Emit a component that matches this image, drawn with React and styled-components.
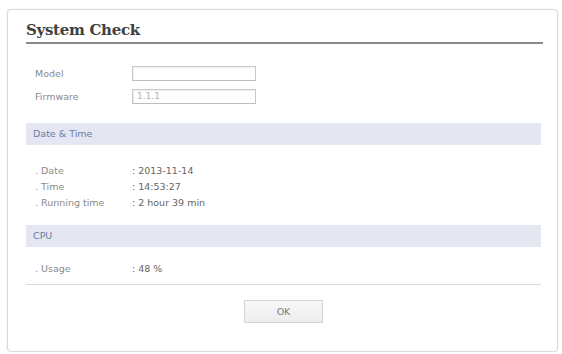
import React from "react";
import styled, { createGlobalStyle } from "styled-components";

const Global = createGlobalStyle`
  html, body { margin: 0; padding: 0; background: #ffffff; }
  body { font-family: "DejaVu Sans", Verdana, sans-serif; }
`;

const Card = styled.div`
  box-sizing: border-box;
  margin: 9px 0 0 7px;
  width: 551px;
  height: 343px;
  border: 1px solid #dadada;
  border-radius: 4px;
  box-shadow: 0 0 2px rgba(0, 0, 0, 0.1);
  background: #fff;
  padding: 10px 16px 0 18px;
  display: flex;
  flex-direction: column;
`;

const Title = styled.h1`
  margin: 0;
  font-family: "DejaVu Serif", Georgia, serif;
  font-weight: bold;
  font-size: 15px;
  line-height: 20px;
  color: #404040;
  padding: 0 0 2px 0;
  border-bottom: 2px solid #8a8a8a;
  margin-right: -2px;
  letter-spacing: -0.3px;
`;

const Form = styled.div`
  margin-top: 22px;
  display: flex;
  flex-direction: column;
  gap: 8px;
`;

const FormRow = styled.div`
  display: grid;
  grid-template-columns: 97px 124px;
  align-items: center;
  padding-left: 9px;
`;

const Label = styled.span`
  font-size: 9.5px;
  color: #8a8a8a;
`;

const Field = styled.div`
  box-sizing: border-box;
  height: 15px;
  border: 1px solid #c8c8c8;
  border-bottom-color: #bdbdbd;
  box-shadow: inset 1px 1px 1px rgba(0, 0, 0, 0.07);
  font-size: 9px;
  color: #b4b4b4;
  padding-left: 4px;
  line-height: 13px;
`;

const SectionBar = styled.div`
  margin-top: ${(p) => p.$gap}px;
  height: 22px;
  background: #e4e6f1;
  color: #6a7ca8;
  font-size: 9.5px;
  line-height: 22px;
  padding-left: 7px;
`;

const InfoList = styled.div`
  margin-top: ${(p) => p.$gap}px;
  display: flex;
  flex-direction: column;
`;

const InfoRow = styled.div`
  display: grid;
  grid-template-columns: 97px 1fr;
  padding-left: 9px;
  height: 16px;
  line-height: 16px;
  font-size: 9.5px;
`;

const InfoLabel = styled.span`
  color: #8a8a8a;
`;

const InfoValue = styled.span`
  color: #666;
`;

const Divider = styled.div`
  margin-top: 7px;
  height: 1px;
  background: #d8d8d8;
`;

const Actions = styled.div`
  display: flex;
  justify-content: center;
  margin-top: 15px;
`;

const Button = styled.button`
  width: 79px;
  height: 23px;
  border: 1px solid #d4d4d4;
  background: linear-gradient(#f8f8f8, #ededed);
  color: #7a7a7a;
  font-family: "DejaVu Sans", Verdana, sans-serif;
  font-size: 9.5px;
  padding: 0;
`;

export default function App() {
  return (
    <>
      <Global />
      <Card>
        <Title>System Check</Title>
        <Form>
          <FormRow>
            <Label>Model</Label>
            <Field />
          </FormRow>
          <FormRow>
            <Label>Firmware</Label>
            <Field>1.1.1</Field>
          </FormRow>
        </Form>
        <SectionBar $gap={19}>Date &amp; Time</SectionBar>
        <InfoList $gap={18}>
          <InfoRow>
            <InfoLabel>. Date</InfoLabel>
            <InfoValue>: 2013-11-14</InfoValue>
          </InfoRow>
          <InfoRow>
            <InfoLabel>. Time</InfoLabel>
            <InfoValue>: 14:53:27</InfoValue>
          </InfoRow>
          <InfoRow>
            <InfoLabel>. Running time</InfoLabel>
            <InfoValue>: 2 hour 39 min</InfoValue>
          </InfoRow>
        </InfoList>
        <SectionBar $gap={14}>CPU</SectionBar>
        <InfoList $gap={14}>
          <InfoRow>
            <InfoLabel>. Usage</InfoLabel>
            <InfoValue>: 48 %</InfoValue>
          </InfoRow>
        </InfoList>
        <Divider />
        <Actions>
          <Button>OK</Button>
        </Actions>
      </Card>
    </>
  );
}
